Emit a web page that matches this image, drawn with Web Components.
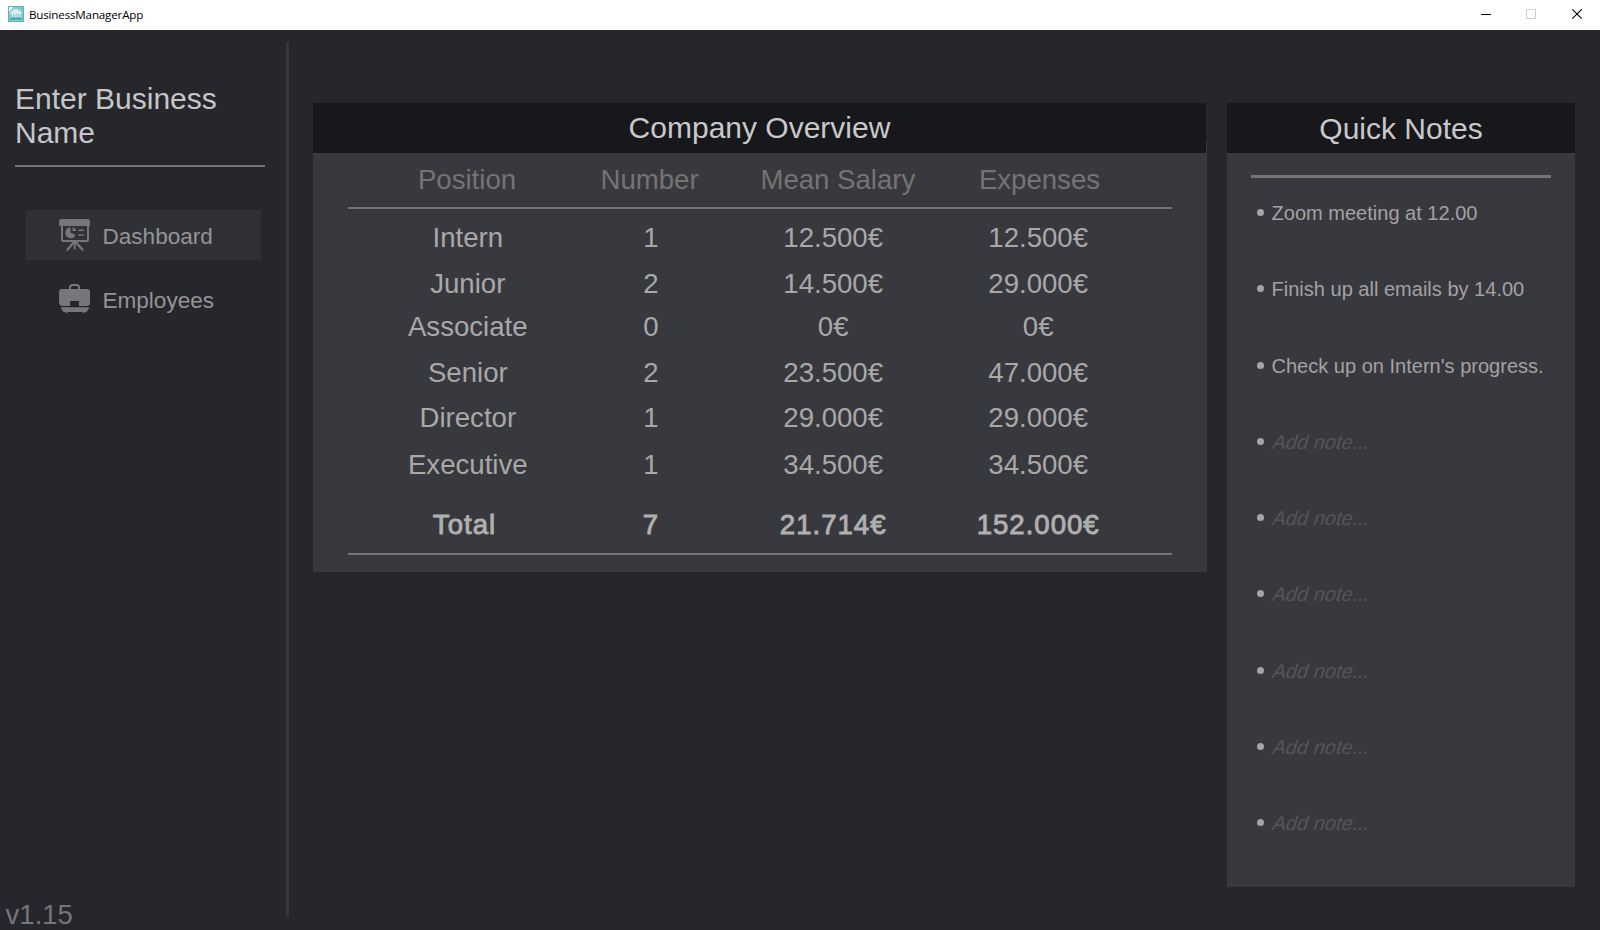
<!DOCTYPE html>
<html lang="en">
<head>
<meta charset="utf-8">
<title>BusinessManagerApp</title>
<style>
html,body{margin:0;height:100%;overflow:hidden;background:#26272c;font-family:"Liberation Sans",Arial,sans-serif}
</style>
</head>
<body>
<business-app></business-app>
<script>
const define = (name, html, setup) => {
  const tpl = document.createElement('template');
  tpl.innerHTML = html;
  customElements.define(name, class extends HTMLElement {
    constructor() {
      super();
      this.attachShadow({mode: 'open'}).append(tpl.content.cloneNode(true));
    }
    connectedCallback() { if (setup) setup(this, this.shadowRoot); }
  });
};

define('title-bar', `
<style>
:host{display:flex;align-items:flex-start;height:30px;background:#fff;color:#000;box-sizing:border-box;padding-left:8px}
.logo{margin-top:6px;width:16px;height:16px}
span{flex:1;margin:6px 0 0 5px;font:11.6px/17px "Open Sans","Noto Sans",sans-serif;letter-spacing:-.17px}
.ctl{margin-top:9px;width:11px;height:11px;margin-right:35px}
.ctl.min{margin-right:34px}
.ctl:last-child{margin-right:17px}
</style>
<svg class="logo" viewBox="0 0 16 16"><rect width="16" height="16" fill="#5fb3b5"/><rect x="1" y="1" width="14" height="14" fill="#86cbd0"/><path d="M1 1h4.500L1 6z" fill="#eef8f8"/><path d="M2.500 6.500 5 4 8 2.800 11 4l2.500 2.500v1.500h-11z" fill="#d9efef"/><path d="M4.500 8v4M7 8v4M9.300 8v4M11.800 8v4" stroke="#e2f3f3" stroke-width="1.100"/><path d="M3 11.500h10l1.200 2.200H1.800z" fill="#4aa5a3"/></svg>
<span><slot></slot></span>
<svg class="ctl min" viewBox="0 0 11 11"><path d="M0 5.500h10" stroke="#000"/></svg>
<svg class="ctl" viewBox="0 0 11 11"><path d="M.5.5h9v9h-9z" fill="none" stroke="#ccc"/></svg>
<svg class="ctl" viewBox="0 0 11 11"><path d="M.3.3l9.400 9.400M9.700.3.3 9.700" stroke="#000" stroke-width="1.100"/></svg>
`);

define('icon-board', `
<style>:host{display:block;width:32px;height:33px}svg{display:block}</style>
<svg width="32" height="33" viewBox="0 0 32 33" fill="none" stroke="#77777b" stroke-linecap="round">
<path d="M2.500 0h26Q31 0 31 2.500V6q0 1-1 1H1Q0 7 0 6V2.500Q0 0 2.500 0z" fill="#77777b" stroke="none"/>
<path d="M3 6.500V21q0 1 1 1h24q1 0 1-1V6.500" stroke-width="2"/>
<path d="M11.500 8.500V13.500l5 2.500A5.300 5.300 0 1 1 11.500 8.500z" fill="#77777b" stroke="none"/>
<path d="M13.600 8.200a4.300 4.300 0 0 1 3.400 3.800h-3.400z" fill="#77777b" stroke="none"/>
<path d="M19.800 11.300h4.700M19.800 16h4.700" stroke-width="1.600"/>
<path d="M14.500 23.500 8.500 30.700M17 23.500l6.500 7.200" stroke-width="2.200"/><path d="M15.700 23v6.500" stroke-width="1.900"/>
</svg>`);

define('icon-case', `
<style>:host{display:block;width:32px;height:33px}svg{display:block}</style>
<svg width="32" height="33" viewBox="0 0 32 33" fill="#77777b">
<path d="M11 6V3.500Q11 1 13.500 1h4Q20 1 20 3.500V6" fill="none" stroke="#77777b" stroke-width="2"/>
<path d="M3 5h25q3 0 3 3v10.500q0 3-3 3.500h-8v-5h-9v5H3q-3-.5-3-3.500V8q0-3 3-3z"/>
<path d="M2 23.200h28v1.300L27.500 28H26l-.7.800h-1.600l-.7-.8H9l-.7.800H6.700L6 28H4.500L2 24.500z"/>
</svg>`);

define('nav-item', `
<style>
:host{display:flex;box-sizing:border-box;width:235px;height:50px;padding:9px 0 0 33px;color:#949497}
:host([active]){background:#303136}
.label{font-size:22.550px;line-height:25px;margin:5px 0 0 11.500px}
</style>
<slot name="icon"></slot><div class="label"><slot></slot></div>`);

define('side-bar', `
<style>
:host{display:flex;flex-direction:column;box-sizing:border-box;width:289px;padding:12px 0 13px}
.inner{flex:1;display:flex;flex-direction:column;box-sizing:border-box;border-right:3px solid #36373b;padding-top:39.500px}
h1{margin:0 21px 0 15px;height:83.500px;border-bottom:2px solid #757577;font-weight:400;font-size:30px;line-height:34px;color:#c6c6c8}
nav{display:flex;flex-direction:column;gap:14px;margin:43px 0 0 26px}
icon-case{margin-top:1px}
.ver{margin:auto 0 -13px 5.600px;font-size:27.500px;line-height:31px;color:#757679}
</style>
<div class="inner">
<h1>Enter Business Name</h1>
<nav>
<nav-item active><icon-board slot="icon"></icon-board>Dashboard</nav-item>
<nav-item><icon-case slot="icon"></icon-case>Employees</nav-item>
</nav>
<div class="ver">v1.15</div>
</div>`);

define('company-overview', `
<style>
:host{display:flex;flex-direction:column;width:894px;height:469px;background:linear-gradient(transparent 38px,#38393e 38px)}
h2{margin:0 1px 0 0;height:50px;box-sizing:border-box;padding-top:8px;background:#17181b;text-align:center;font-weight:400;font-size:30px;line-height:33px;color:#c9c9c9}
.head,.body{display:grid;font-size:27.600px;line-height:31px;text-align:center;margin-left:72.500px;white-space:nowrap}
.head{grid-template-columns:163px 202.200px 174.400px 228.800px;height:43px;padding-top:11px;color:#747474}
.rule{height:2px;background:#757577;margin:0 35px}
.body{grid-template-columns:164.600px 201.800px 162.600px 247.400px;grid-template-rows:46px 43px 46px 45px 47px 60px 44px;padding-top:13px;color:#a8a8a8}
.total{-webkit-text-stroke:.9px #b0b0b0;color:#b0b0b0;letter-spacing:1px}
.total.first{margin-right:6.600px}
</style>
<h2>Company Overview</h2>
<div class="head"></div>
<div class="rule"></div>
<div class="body"></div>
<div class="rule"></div>`, (el, root) => {
  const cell = (text, cls) => {
    const d = document.createElement('div');
    d.textContent = text;
    if (cls) d.className = cls;
    return d;
  };
  root.querySelector('.head').append(...['Position', 'Number', 'Mean Salary', 'Expenses'].map(t => cell(t)));
  const rows = [
    ['Intern', '1', '12.500€', '12.500€'],
    ['Junior', '2', '14.500€', '29.000€'],
    ['Associate', '0', '0€', '0€'],
    ['Senior', '2', '23.500€', '47.000€'],
    ['Director', '1', '29.000€', '29.000€'],
    ['Executive', '1', '34.500€', '34.500€']
  ];
  const body = root.querySelector('.body');
  rows.forEach(r => body.append(...r.map(t => cell(t))));
  body.append(...['Total', '7', '21.714€', '152.000€'].map((t, i) => cell(t, i ? 'total' : 'total first')));
});

define('note-item', `
<style>
:host{display:flex;align-items:flex-start;height:76.250px;font-size:20.050px;line-height:22px;color:#a2a2a4;white-space:nowrap}
i{width:7px;height:7px;border-radius:50%;background:#a5a5a6;margin:7px 7.500px 0 6px}
:host([empty]) span{color:#545559;margin-left:-.5px;transform:skewX(-17deg);transform-origin:0 18px}
</style>
<i></i><span><slot></slot></span>`);

define('quick-notes', `
<style>
:host{display:block;width:348px;height:784px;background:#38393e}
h2{margin:0;height:50px;box-sizing:border-box;padding-top:9px;background:#17181b;text-align:center;font-weight:400;font-size:30px;line-height:33px;color:#c9c9c9}
.rule{height:3px;background:#777576;margin:22px 24px 24px}
.list{display:flex;flex-direction:column;padding-left:24px}
</style>
<h2>Quick Notes</h2>
<div class="rule"></div>
<div class="list"><slot></slot></div>`);

define('business-app', `
<style>
:host{display:flex;flex-direction:column;height:930px;width:1600px;background:#26272c}
main{flex:1;display:flex;align-items:flex-start}
side-bar{align-self:stretch}
company-overview{margin:73px 20px 0 24px}
quick-notes{margin-top:73px}
</style>
<title-bar>BusinessManagerApp</title-bar>
<main>
<side-bar></side-bar>
<company-overview></company-overview>
<quick-notes>
<note-item>Zoom meeting at 12.00</note-item>
<note-item>Finish up all emails by 14.00</note-item>
<note-item>Check up on Intern's progress.</note-item>
<note-item empty>Add note...</note-item>
<note-item empty>Add note...</note-item>
<note-item empty>Add note...</note-item>
<note-item empty>Add note...</note-item>
<note-item empty>Add note...</note-item>
<note-item empty>Add note...</note-item>
</quick-notes>
</main>`);
</script>
</body>
</html>
